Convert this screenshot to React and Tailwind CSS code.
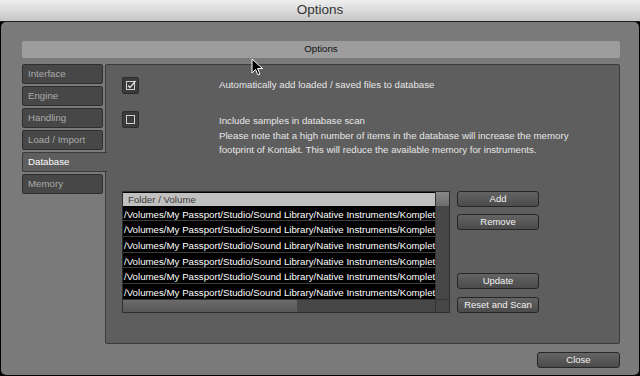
import React from 'react';

const FONT = "font-['Liberation_Sans',Arial,sans-serif]";

const tabs = ['Interface', 'Engine', 'Handling', 'Load / Import', 'Database', 'Memory'];

const folders = Array.from({ length: 6 }, () =>
  '/Volumes/My Passport/Studio/Sound Library/Native Instruments/Komplete'
);

// little square checkbox, Kontakt style
const CheckBox = ({ checked }) => (
  <div className="w-[17px] h-[17px] shrink-0 rounded-[2px] bg-[#3b3b3b] border border-[#2c2c2c]">
    <svg width="15" height="15" viewBox="0 0 15 15">
      <rect x="3.5" y="3.5" width="8" height="8" fill="none" stroke="#cfcfcf" strokeWidth="1" />
      {checked && (
        <path d="M5 7.5 L7 9.5 L12.5 3" fill="none" stroke="#e0e0e0" strokeWidth="1.2" />
      )}
    </svg>
  </div>
);

const Button = ({ children, className = '' }) => (
  <div
    className={`h-[16px] rounded-[3px] border border-[#262626] bg-gradient-to-b from-[#646464] to-[#4b4b4b] text-[#f2f2f2] text-[9.5px] leading-[14px] text-center ${className}`}
  >
    {children}
  </div>
);

const Cursor = () => (
  <svg className="absolute left-[251px] top-[58px]" width="13" height="19" viewBox="0 0 13 19">
    <path d="M1 1 L1 15 L4.5 11.5 L7 17 L9 16 L6.5 10.5 L11.5 10.5 Z" fill="#000" stroke="#fff" strokeWidth="1" />
  </svg>
);

export default function App() {
  return (
    <div className={`relative w-[640px] h-[376px] bg-black flex flex-col overflow-hidden ${FONT}`}>
      {/* title bar */}
      <div className="h-[21px] bg-gradient-to-b from-[#efefef] to-[#c6c6c6] flex items-center justify-center text-[13.5px] text-[#333]">
        Options
      </div>
      <div className="h-[1px] bg-[#1e1e1e]" />

      {/* window body */}
      <div className="flex-1 mx-[1px] mb-[1px] rounded-[5px] bg-[#7a7a7a] pt-[19px] pl-[21px] pr-[19px] flex flex-col">
        <div className="h-[17px] rounded-[2px] bg-[#9d9d9d] flex items-center justify-center text-[9.7px] text-[#111]">
          Options
        </div>

        <div className="mt-[6px] flex h-[280px]">
          {/* side tabs */}
          <div className="w-[83px] flex flex-col gap-[2px] shrink-0">
            {tabs.map((t) =>
              t === 'Database' ? (
                <div
                  key={t}
                  className="relative z-10 w-[85px] h-[20px] rounded-l-[2px] bg-[#5e5e5e] border border-r-0 border-[#3b3b3b] pl-[5px] text-[9.7px] leading-[18px] text-white"
                >
                  {t}
                </div>
              ) : (
                <div
                  key={t}
                  className="w-[81px] h-[20px] rounded-[2px] bg-[#474747] border border-[#2e2e2e] pl-[5px] text-[9.7px] leading-[18px] text-[#ababab]"
                >
                  {t}
                </div>
              )
            )}
          </div>

          {/* database panel */}
          <div className="flex-1 rounded-[2px] bg-[#5e5e5e] border border-[#3b3b3b] pl-[16px] pt-[12px] text-[9.7px] text-[#e6e6e6]">
            <div className="flex items-center">
              <CheckBox checked />
              <div className="ml-[80px]">Automatically add loaded / saved files to database</div>
            </div>

            <div className="flex items-start mt-[17px]">
              <CheckBox />
              <div className="ml-[80px] mt-[3px] leading-[14.5px]">
                <div>Include samples in database scan</div>
                <div>Please note that a high number of items in the database will increase the memory</div>
                <div>footprint of Kontakt. This will reduce the available memory for instruments.</div>
              </div>
            </div>

            <div className="flex mt-[33px]">
              {/* folder list */}
              <div className="w-[328px] h-[122px] border border-[#2e2e2e] bg-[#474747] flex">
                <div className="flex-1 min-w-0 flex flex-col">
                  <div className="flex-1 bg-black overflow-hidden pt-[1px] flex flex-col">
                    <div className="h-[13px] bg-[#c0c0c0] text-[#3a3a3a] pl-[5px] leading-[13px] whitespace-nowrap">
                      Folder / Volume
                    </div>
                    {folders.map((f, i) => (
                      <div
                        key={i}
                        className={`flex-1 pt-[2px] leading-[13px] pl-[1px] text-white whitespace-nowrap overflow-hidden ${
                          i > 0 ? 'border-t border-[#3c3c3c]' : ''
                        }`}
                      >
                        {f}
                      </div>
                    ))}
                  </div>
                  <div className="h-[13px] bg-[#474747] border-t border-[#333] flex">
                    <div className="w-[174px] bg-gradient-to-b from-[#6a6a6a] to-[#585858]" />
                  </div>
                </div>
                <div className="w-[14px] flex flex-col border-l border-[#333]">
                  <div className="h-[14px] bg-gradient-to-b from-[#888] to-[#6e6e6e]" />
                  <div className="flex-1 bg-[#474747]" />
                  <div className="h-[13px] border-t border-[#333] bg-[#474747]" />
                </div>
              </div>

              {/* buttons */}
              <div className="ml-[7px] w-[82px] flex flex-col justify-between">
                <div className="flex flex-col gap-[7px]">
                  <Button>Add</Button>
                  <Button>Remove</Button>
                </div>
                <div className="flex flex-col gap-[8px]">
                  <Button>Update</Button>
                  <Button>Reset and Scan</Button>
                </div>
              </div>
            </div>
          </div>
        </div>

        <div className="mt-[8px] flex justify-end">
          <Button className="w-[83px]">Close</Button>
        </div>
      </div>

      <Cursor />
    </div>
  );
}
